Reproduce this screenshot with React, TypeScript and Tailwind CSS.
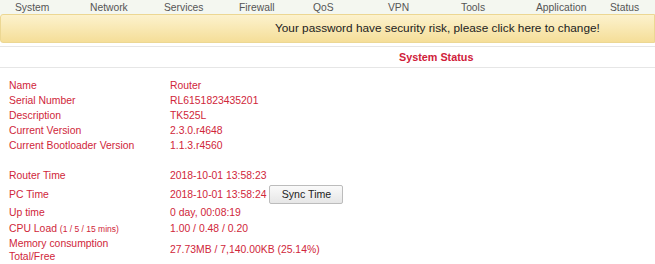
import React from 'react';

const App: React.FC = () => {
  const menu = [
    { label: 'System', w: 'w-[75px]' },
    { label: 'Network', w: 'w-[74px]' },
    { label: 'Services', w: 'w-[75px]' },
    { label: 'Firewall', w: 'w-[74px]' },
    { label: 'QoS', w: 'w-[75px]' },
    { label: 'VPN', w: 'w-[73px]' },
    { label: 'Tools', w: 'w-[75px]' },
    { label: 'Application', w: 'w-[74px]' },
    { label: 'Status', w: 'w-[60px]' },
  ];

  const info = [
    ['Name', 'Router'],
    ['Serial Number', 'RL6151823435201'],
    ['Description', 'TK525L'],
    ['Current Version', '2.3.0.r4648'],
    ['Current Bootloader Version', '1.1.3.r4560'],
  ];

  return (
    <div className="w-[655px] h-[264px] overflow-hidden bg-white font-['Liberation_Sans',Arial,sans-serif] text-[10.4px]">
      {/* top menu */}
      <div className="h-[15px] bg-[#f4f7f0] flex items-center pl-[15px] text-[#555] text-[10.3px]">
        {menu.map((m) => (
          <div key={m.label} className={`${m.w} shrink-0 leading-[15px]`}>
            {m.label}
          </div>
        ))}
      </div>

      {/* warning banner */}
      <div className="h-[29px] mt-[-1px] rounded-l-[3px] border border-[#ecd793] bg-gradient-to-b from-[#fcf2cd] to-[#f5de98] flex items-center pl-[274px] text-[11.8px] text-[#222]">
        Your password have security risk, please click here to change!
      </div>

      {/* section header */}
      <div className="mt-[3px] border-t border-[#e6e6e6] border-b h-[22px] flex items-center pl-[399px] font-bold text-[10.8px] text-[#d0203a]">
        System Status
      </div>

      <div className="pl-[9px] pt-[10px] text-[#d0263a]">
        {info.map(([k, v]) => (
          <div key={k} className="flex h-[15px] items-center">
            <div className="w-[161px] shrink-0">{k}</div>
            <div>{v}</div>
          </div>
        ))}

        <div className="flex h-[19px] items-center mt-[13px]">
          <div className="w-[161px] shrink-0">Router Time</div>
          <div>2018-10-01 13:58:23</div>
        </div>
        <div className="flex h-[19px] items-center">
          <div className="w-[161px] shrink-0">PC Time</div>
          <div>2018-10-01 13:58:24</div>
          <button className="ml-[3px] h-[19px] w-[74px] rounded-[2px] border border-[#bcbcbc] bg-gradient-to-b from-[#fafafa] to-[#e6e6e6] text-[#222] text-[10.6px]">
            Sync Time
          </button>
        </div>
        <div className="flex h-[17px] items-center">
          <div className="w-[161px] shrink-0">Up time</div>
          <div>0 day, 00:08:19</div>
        </div>
        <div className="flex h-[15px] items-center">
          <div className="w-[161px] shrink-0">
            CPU Load <span className="text-[8.5px]">(1 / 5 / 15 mins)</span>
          </div>
          <div>1.00 / 0.48 / 0.20</div>
        </div>
        <div className="flex items-center mt-[1px]">
          <div className="w-[161px] shrink-0 leading-[13px]">
            Memory consumption
            <br />
            Total/Free
          </div>
          <div>27.73MB / 7,140.00KB (25.14%)</div>
        </div>
      </div>
    </div>
  );
};

export default App;
